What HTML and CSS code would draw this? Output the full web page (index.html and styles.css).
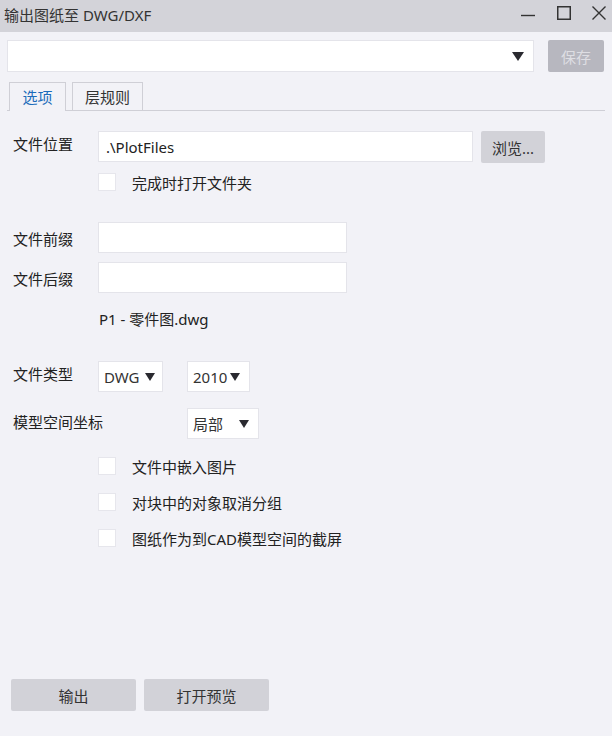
FILE: index.html
```html
<!DOCTYPE html>
<html>
    <head>
        <meta charset="utf-8">
        <title>输出图纸至 DWG/DXF</title>
        <link rel="stylesheet" href="styles.css">
    </head>
    <body>
        <div class="window">
            <div class="titlebar">
                <span class="title">输出图纸至 DWG/DXF</span>
                <svg class="win-icon win-min" width="14" height="14" viewBox="0 0 14 14"><path d="M0 7.5H14" stroke="#333" stroke-width="1.4"/></svg>
                <svg class="win-icon win-max" width="14" height="14" viewBox="0 0 14 14"><rect x="0.75" y="0.75" width="12.5" height="12.5" fill="none" stroke="#333" stroke-width="1.5"/></svg>
                <svg class="win-icon win-close" width="14" height="14" viewBox="0 0 14 14"><path d="M0.5 0.5L13.5 13.5M13.5 0.5L0.5 13.5" stroke="#333" stroke-width="1.4"/></svg>
            </div>

            <div class="toolbar">
                <div class="combo">
                    <span class="arrow big"></span>
                </div>
                <button type="button" class="save" disabled>保存</button>
            </div>

            <div class="tabs">
                <div class="tab active">选项</div>
                <div class="tab">层规则</div>
            </div>

            <div class="form">
                <div class="row row-location">
                    <label class="label">文件位置</label>
                    <div class="input input-path">.\PlotFiles</div>
                    <button type="button" class="btn browse">浏览...</button>
                </div>
                <div class="row check-row check-open">
                    <span class="check"></span>
                    <span class="check-label">完成时打开文件夹</span>
                </div>

                <div class="row row-center row-prefix">
                    <label class="label">文件前缀</label>
                    <div class="input input-short"></div>
                </div>
                <div class="row row-center row-suffix">
                    <label class="label">文件后缀</label>
                    <div class="input input-short"></div>
                </div>
                <div class="filename">P1 - 零件图.dwg</div>

                <div class="row row-type">
                    <label class="label">文件类型</label>
                    <div class="select select-dwg"><span>DWG</span><span class="arrow"></span></div>
                    <div class="select select-ver"><span>2010</span><span class="arrow"></span></div>
                </div>
                <div class="row row-coord">
                    <label class="label label-wide">模型空间坐标</label>
                    <div class="select select-coord"><span>局部</span><span class="arrow"></span></div>
                </div>

                <div class="row check-row check-first">
                    <span class="check"></span>
                    <span class="check-label">文件中嵌入图片</span>
                </div>
                <div class="row check-row">
                    <span class="check"></span>
                    <span class="check-label">对块中的对象取消分组</span>
                </div>
                <div class="row check-row">
                    <span class="check"></span>
                    <span class="check-label">图纸作为到CAD模型空间的截屏</span>
                </div>
            </div>

            <div class="footer">
                <button type="button" class="btn action">输出</button>
                <button type="button" class="btn action">打开预览</button>
            </div>
        </div>
    </body>
</html>
```

FILE: styles.css
```css
html {
    font-size: 15px;
    font-family: "Noto Sans", "Noto Sans CJK SC", sans-serif;
}

body {
    margin: 0;
    color: #222;
    overflow: hidden;
}

* {
    box-sizing: border-box;
}

.window {
    display: flex;
    flex-direction: column;
    height: 736px;
    background: #f2f2f7;
}

/* title bar */

.titlebar {
    display: flex;
    align-items: center;
    height: 32px;
    padding-left: 4px;
    background: #d3d3d9;
    color: #333;
    line-height: 20px;
}

.title {
    flex: 1;
    margin-top: -2px;
}

.win-min {
    margin-right: 22px;
    margin-top: -2px;
}

.win-max {
    margin-right: 21px;
    margin-top: -6px;
}

.win-close {
    margin-right: 6px;
    margin-top: -6px;
}

/* toolbar */

.toolbar {
    display: flex;
    margin: 8px 8px 0 7px;
}

.combo {
    display: flex;
    align-items: center;
    justify-content: flex-end;
    width: 528px;
    height: 32px;
    padding-right: 9px;
    background: white;
    border: 1px solid #e4e4ea;
}

.save {
    width: 56px;
    height: 32px;
    margin-left: 14px;
    border: none;
    border-radius: 2px;
    background: #b7b7bf;
    color: #dedee3;
    font: inherit;
    padding: 0;
}

.arrow {
    width: 0;
    height: 0;
    flex: none;
    border-left: 5.5px solid transparent;
    border-right: 5.5px solid transparent;
    border-top: 8px solid #2a2a30;
}

.arrow.big {
    border-left-width: 6px;
    border-right-width: 6px;
    border-top-width: 9px;
}

/* tabs */

.tabs {
    display: flex;
    margin: 10px 7px 0 7px;
    padding-left: 2px;
    border-bottom: 1px solid #cfcfd6;
}

.tab {
    height: 28px;
    padding-top: 3px;
    line-height: 22px;
    text-align: center;
    border: 1px solid #cfcfd6;
    border-bottom: none;
    color: #333;
}

.tab:first-child {
    width: 57px;
}

.tab + .tab {
    width: 71px;
    margin-left: 6px;
}

.tab.active {
    height: 29px;
    margin-bottom: -1px;
    background: #f2f2f7;
    color: #1c6cba;
}

/* form */

.form {
    padding: 0 13px;
}

.row {
    display: flex;
    align-items: flex-start;
}

.row-center {
    align-items: center;
}

.label {
    width: 85px;
    flex: none;
    padding-top: 3px;
    line-height: 20px;
}

.row-center .label {
    padding-top: 2px;
}

.label-wide {
    width: 174px;
    padding-top: 4px;
}

.row-location {
    margin-top: 20px;
}

.input {
    height: 31px;
    padding: 0 7px;
    background: white;
    border: 1px solid #e4e4ea;
    line-height: 30px;
}

.input-path {
    width: 375px;
}

.input-short {
    width: 249px;
}

.btn {
    border: none;
    border-radius: 2px;
    background: #d2d2d8;
    color: #333;
    font: inherit;
    padding: 0;
}

.browse {
    width: 64px;
    height: 32px;
    margin-left: 8px;
}

.check-row {
    align-items: center;
    height: 18px;
    padding-left: 85px;
    margin-top: 18px;
}

.check {
    width: 18px;
    height: 18px;
    flex: none;
    background: white;
    border: 1px solid #e6e6ec;
}

.check-label {
    margin-left: 16px;
    line-height: 18px;
    position: relative;
    top: 1px;
}

.check-open {
    margin-top: 10px;
}

.row-prefix {
    margin-top: 31px;
}

.row-suffix {
    margin-top: 9px;
}

.filename {
    margin-top: 16px;
    padding-left: 86px;
    line-height: 20px;
}

.row-type {
    margin-top: 32px;
}

.row-coord {
    margin-top: 16px;
}

.select {
    display: flex;
    align-items: center;
    justify-content: space-between;
    height: 31px;
    padding: 0 9px 0 5px;
    background: white;
    border: 1px solid #e4e4ea;
    color: #333;
    white-space: nowrap;
}

.select-dwg {
    width: 65px;
    padding-right: 7px;
}

.select-ver {
    width: 63px;
    margin-left: 24px;
}

.select-coord {
    width: 72px;
}

.check-first {
    margin-top: 18px;
}

/* footer */

.footer {
    display: flex;
    gap: 8px;
    margin-top: auto;
    padding: 0 0 25px 11px;
}

.action {
    width: 125px;
    height: 32px;
}
```
